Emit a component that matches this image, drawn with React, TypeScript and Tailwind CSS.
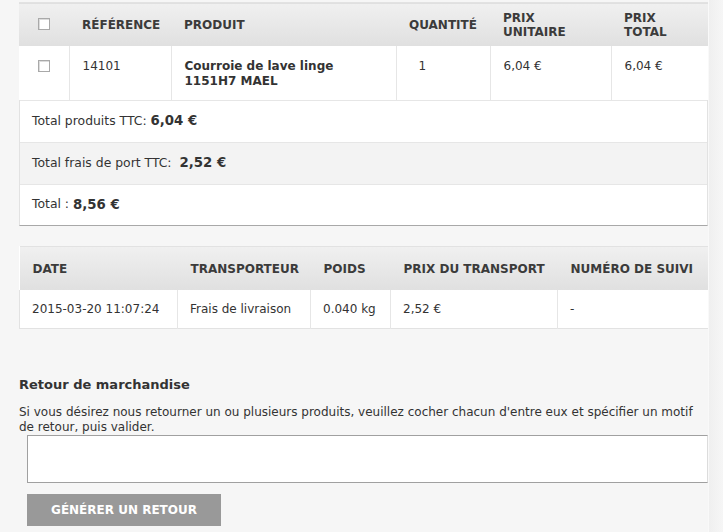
export default function App() {
  const products = [
    {
      ref: "14101",
      name: ["Courroie de lave linge", "1151H7 MAEL"],
      qty: "1",
      unit: "6,04 €",
      total: "6,04 €",
    },
  ];

  const shipping = [
    {
      date: "2015-03-20 11:07:24",
      carrier: "Frais de livraison",
      weight: "0.040 kg",
      price: "2,52 €",
      tracking: "-",
    },
  ];

  const Checkbox = () => (
    <span className="inline-block w-[12px] h-[12px] bg-white border border-[#a9a9a9] shadow-[inset_1px_1px_0_#dcdcdc]" />
  );

  const th =
    "text-left align-middle font-bold uppercase text-[12px] leading-[14px] text-[#3b3b3b] pl-[13px] pr-0 pt-[2px] whitespace-nowrap";

  return (
    <div className="w-full h-[532px] bg-[#f6f6f6] flex font-['DejaVu_Sans',sans-serif] text-[12px] text-[#333]">
      <div className="w-[708px] pl-[19px] pt-[2px] flex flex-col">
        {/* Products */}
        <table className="w-[689px] table-fixed border-collapse bg-white">
          <colgroup>
            <col className="w-[50px]" />
            <col className="w-[102px]" />
            <col className="w-[225px]" />
            <col className="w-[94px]" />
            <col className="w-[121px]" />
            <col className="w-[97px]" />
          </colgroup>
          <thead>
            <tr className="h-[43px] bg-gradient-to-b from-[#f0f0f0] to-[#e0e0e0] border-t border-[#e2e2e2]">
              <th className="text-center align-middle pt-[4px]">
                <Checkbox />
              </th>
              <th className={th}>Référence</th>
              <th className={th}>Produit</th>
              <th className={th}>Quantité</th>
              <th className={th}>
                Prix
                <br />
                unitaire
              </th>
              <th className={th}>
                Prix
                <br />
                total
              </th>
            </tr>
          </thead>
          <tbody>
            {products.map((p) => (
              <tr key={p.ref} className="h-[54px] align-top leading-[15px]">
                <td className="text-center pt-[14px] border-r border-[#e6e6e6]">
                  <Checkbox />
                </td>
                <td className="px-[13px] pt-[13px] border-r border-[#e6e6e6]">{p.ref}</td>
                <td className="px-[13px] pt-[13px] font-bold border-r border-[#e6e6e6]">
                  {p.name[0]}
                  <br />
                  {p.name[1]}
                </td>
                <td className="pl-[22px] pt-[13px] border-r border-[#e6e6e6]">{p.qty}</td>
                <td className="px-[13px] pt-[13px] border-r border-[#e6e6e6]">{p.unit}</td>
                <td className="px-[13px] pt-[13px]">{p.total}</td>
              </tr>
            ))}
          </tbody>
        </table>

        {/* Totals */}
        <div className="w-[689px] border-l border-r border-[#e2e2e2] border-b border-b-[#a8a8a8] text-[12.4px]">
          <div className="h-[42px] bg-white border-t border-[#e6e6e6] flex items-center px-[12px]">
            Total produits TTC:&nbsp;<span className="font-bold text-[13.3px]">6,04 €</span>
          </div>
          <div className="h-[42px] bg-[#f3f3f3] border-t border-[#e6e6e6] flex items-center px-[12px] gap-[8px]">
            <span>Total frais de port TTC:</span>
            <span className="font-bold text-[13.3px]">2,52 €</span>
          </div>
          <div className="h-[41px] bg-white border-t border-[#e6e6e6] flex items-center px-[12px]">
            Total :&nbsp;<span className="font-bold text-[13.3px]">8,56 €</span>
          </div>
        </div>

        {/* Shipping */}
        <table className="mt-[20px] w-[689px] table-fixed border-collapse bg-white">
          <colgroup>
            <col className="w-[158px]" />
            <col className="w-[133px]" />
            <col className="w-[80px]" />
            <col className="w-[167px]" />
            <col className="w-[151px]" />
          </colgroup>
          <thead>
            <tr className="h-[44px] bg-gradient-to-b from-[#f0f0f0] to-[#e0e0e0] border-t border-[#e2e2e2]">
              <th className={th}>Date</th>
              <th className={th}>Transporteur</th>
              <th className={th}>Poids</th>
              <th className={th}>Prix du transport</th>
              <th className={th}>Numéro de suivi</th>
            </tr>
          </thead>
          <tbody>
            {shipping.map((s) => (
              <tr key={s.date} className="h-[38px] border-b border-l border-[#e2e2e2]">
                <td className="px-[12px] border-r border-[#e6e6e6]">{s.date}</td>
                <td className="px-[12px] border-r border-[#e6e6e6]">{s.carrier}</td>
                <td className="px-[12px] border-r border-[#e6e6e6]">{s.weight}</td>
                <td className="px-[12px] border-r border-[#e6e6e6]">{s.price}</td>
                <td className="px-[12px]">{s.tracking}</td>
              </tr>
            ))}
          </tbody>
        </table>

        {/* Return */}
        <h3 className="mt-[48px] font-bold text-[13px] leading-[16px] text-[#333]">
          Retour de marchandise
        </h3>
        <p className="mt-[12px] leading-[15px] text-[12px]">
          Si vous désirez nous retourner un ou plusieurs produits, veuillez cocher chacun d'entre eux et spécifier un motif de retour, puis valider.
        </p>
        <textarea className="ml-[8px] w-[681px] h-[48px] bg-white border border-[#a0a0a0] border-r-[#dcdcdc] resize-none outline-none" />
        <button className="ml-[8px] mt-[11px] w-[194px] h-[32px] bg-[#999999] text-white font-bold uppercase text-[12px]">
          Générer un retour
        </button>
      </div>
      <div className="flex-1 bg-gradient-to-r from-[#efefef] to-[#f6f6f6] border-l border-[#f9f9f9]" />
    </div>
  );
}
